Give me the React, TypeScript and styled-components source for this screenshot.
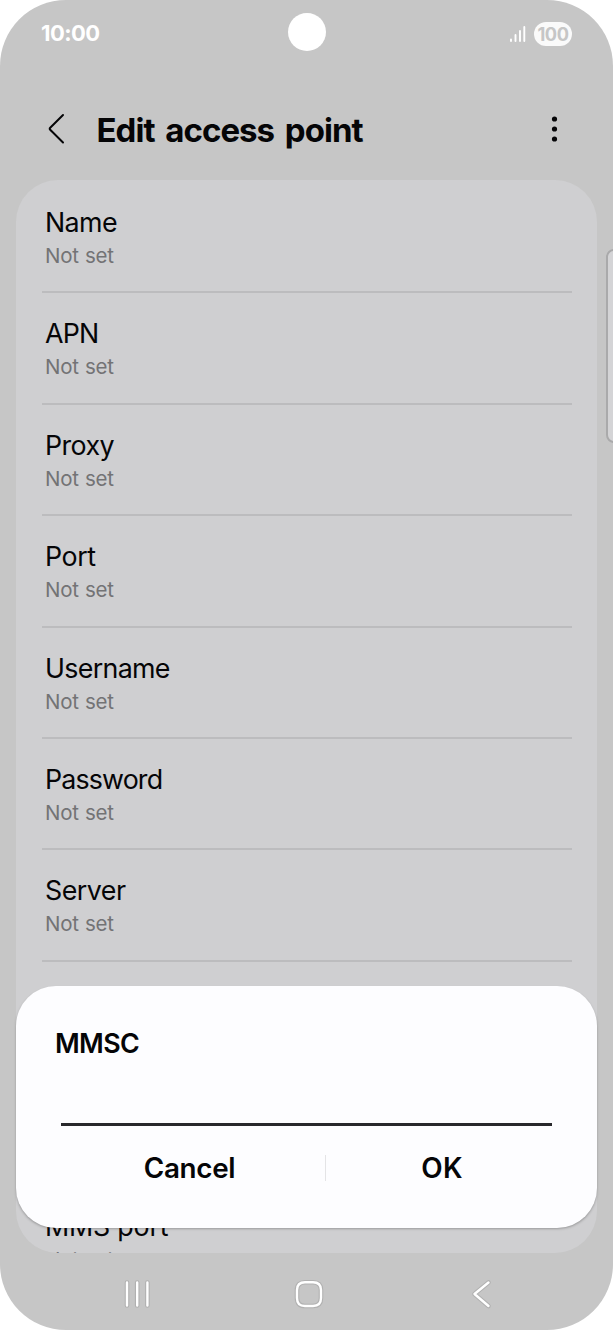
import React from "react";
import styled, { createGlobalStyle } from "styled-components";

const GlobalStyle = createGlobalStyle`
  html, body { margin: 0; background: #fff; }
  *, *::before, *::after { box-sizing: border-box; }
`;

const Screen = styled.div`
  position: relative;
  display: flex;
  flex-direction: column;
  width: 613px;
  height: 1330px;
  overflow: hidden;
  background: #c6c6c6;
  border-radius: 66px;
  font-family: Inter, "Liberation Sans", sans-serif;
  color: #050507;
`;

const StatusBar = styled.header`
  display: grid;
  grid-template-columns: 1fr auto 1fr;
  align-items: center;
  height: 64px;
  padding: 3px 41px 0;
  color: #fff;
`;

const Clock = styled.time`
  margin-top: -1px;
  font-size: 22px;
  font-weight: 700;
  line-height: 24px;
  letter-spacing: -0.55px;
`;

const Camera = styled.div`
  width: 38px;
  height: 38px;
  margin-top: -3px;
  border-radius: 50%;
  background: #fff;
`;

const StatusIcons = styled.div`
  display: flex;
  justify-content: flex-end;
  align-items: center;
  gap: 8px;
`;

const Battery = styled.span`
  display: flex;
  justify-content: center;
  align-items: center;
  width: 38px;
  height: 24px;
  border-radius: 12px;
  background: #fafafa;
  color: #c6c6c6;
  font-size: 18.2px;
  font-weight: 700;
  letter-spacing: -0.4px;
`;

const TitleBar = styled.div`
  display: flex;
  align-items: center;
  height: 116px;
  padding: 14px 49px 0 46px;
`;

const Title = styled.h1`
  flex: 1;
  margin: 2px 0 0 30.5px;
  font-size: 33px;
  font-weight: 700;
  line-height: 40px;
  letter-spacing: -0.95px;
  word-spacing: 3.8px;
  white-space: nowrap;
`;

const List = styled.ul`
  flex: none;
  height: 1073px;
  margin: 0 16px;
  padding: 2.1px 25.5px 0;
  overflow: hidden;
  list-style: none;
  border-radius: 42px;
  background: #cfcfd1;
`;

const Item = styled.li`
  height: 111.4px;
  padding: 23px 4px 0 3.5px;
  border-bottom: 2px solid #bcbcbe;

  &:last-child {
    padding-top: 24px;
  }
`;

const Label = styled.div<{ $track: number }>`
  font-size: 26.8px;
  line-height: 34px;
  letter-spacing: ${(p) => p.$track}px;
  white-space: nowrap;
`;

const Value = styled.div`
  margin-top: 3px;
  font-size: 20.5px;
  line-height: 28px;
  letter-spacing: -0.25px;
  word-spacing: 0.8px;
  color: #737375;
`;

const EdgeHandle = styled.div`
  position: absolute;
  top: 249px;
  right: -10px;
  width: 17px;
  height: 194px;
  border: 2px solid #aaaaab;
  border-radius: 8px;
  background: #d4d4d6;
`;

const Dialog = styled.section`
  position: absolute;
  left: 16px;
  right: 16px;
  top: 985.7px;
  height: 242px;
  padding: 40.3px 39px 0;
  border-radius: 40px;
  background: #fdfdff;
  box-shadow: 0 1.5px 2.5px -0.5px rgba(0, 0, 0, 0.26);
`;

const DialogTitle = styled.h2`
  margin: 0;
  font-size: 26.8px;
  font-weight: 600;
  line-height: 35px;
  letter-spacing: -0.6px;
`;

const Field = styled.input`
  display: block;
  width: 491px;
  height: 65px;
  margin: 0 0 0 6px;
  padding: 0;
  border: 0;
  border-bottom: 3px solid #28282c;
  background: transparent;
  font: inherit;
  outline: none;
`;

const Actions = styled.div`
  display: flex;
  align-items: center;
  margin: 23px -3px 0 -1px;
  height: 38px;
`;

const Action = styled.button<{ $width: number; $track: number }>`
  width: ${(p) => p.$width}px;
  padding: 0;
  border: 0;
  background: none;
  color: inherit;
  font-family: inherit;
  font-size: 27.8px;
  font-weight: 600;
  line-height: 38px;
  letter-spacing: ${(p) => p.$track}px;
`;

const ActionDivider = styled.div`
  width: 1px;
  height: 26px;
  background: #e4e4e6;
`;

const NavBar = styled.nav`
  position: absolute;
  left: 0;
  right: 0;
  bottom: 0;
  display: flex;
  justify-content: space-between;
  align-items: center;
  height: 72px;
  padding: 0 116px 0 121px;
  fill: none;
  stroke-linecap: round;
  stroke-linejoin: round;
`;

const NavIcon = ({ d }: { d: string }) => (
  <svg width="32" height="32" viewBox="0 0 32 32">
    <path d={d} stroke="#b1b1b1" strokeWidth="4.6" />
    <path d={d} stroke="#fff" strokeWidth="2.4" />
  </svg>
);

const settings = [
  { label: "Name", track: -0.6 },
  { label: "APN", track: -0.8 },
  { label: "Proxy", track: -0.6 },
  { label: "Port", track: -0.4 },
  { label: "Username", track: -0.68 },
  { label: "Password", track: -0.85 },
  { label: "Server", track: -0.5 },
  { label: "MMSC", track: -0.3 },
  { label: "MMS proxy", track: -0.3 },
  { label: "MMS port", track: -0.2 },
];

export default function App() {
  return (
    <>
      <GlobalStyle />
      <Screen>
        <StatusBar>
          <Clock>10:00</Clock>
          <Camera />
          <StatusIcons>
            <svg width="17" height="18" viewBox="0 0 17 18" stroke="#fff" strokeWidth="1.9" strokeLinecap="round">
              <path d="M2 14.5V16M6.5 10V16M11 6V16M15.3 2V16" />
            </svg>
            <Battery>100</Battery>
          </StatusIcons>
        </StatusBar>
        <TitleBar>
          <svg width="20" height="32" viewBox="0 0 20 32" fill="none" stroke="#050507" strokeWidth="2" strokeLinecap="round" strokeLinejoin="round">
            <path d="M17 2L4.2 14.8Q3.2 15.8 4.2 16.8L17 29.5" />
          </svg>
          <Title>Edit access point</Title>
          <svg width="20" height="30" viewBox="0 0 20 30" fill="#050507">
            <circle cx="10.5" cy="5" r="2.6" />
            <circle cx="10.5" cy="15" r="2.6" />
            <circle cx="10.5" cy="25" r="2.6" />
          </svg>
        </TitleBar>
        <List>
          {settings.map((s) => (
            <Item key={s.label}>
              <Label $track={s.track}>{s.label}</Label>
              <Value>Not set</Value>
            </Item>
          ))}
        </List>
        <EdgeHandle />
        <Dialog role="dialog" aria-label="MMSC">
          <DialogTitle>MMSC</DialogTitle>
          <Field aria-label="MMSC" />
          <Actions>
            <Action $width={271} $track={-0.3}>Cancel</Action>
            <ActionDivider />
            <Action $width={232} $track={0.2}>OK</Action>
          </Actions>
        </Dialog>
        <NavBar>
          <NavIcon d="M6 4.5V27.5M16.2 4.5V27.5M26.4 4.5V27.5" />
          <NavIcon d="M12 4.2H20Q28 4.2 28 12V20Q28 28 20 28H12Q4 28 4 20V12Q4 4.2 12 4.2Z" />
          <NavIcon d="M23.5 4.5L9.5 16L23.5 28" />
        </NavBar>
      </Screen>
    </>
  );
}
